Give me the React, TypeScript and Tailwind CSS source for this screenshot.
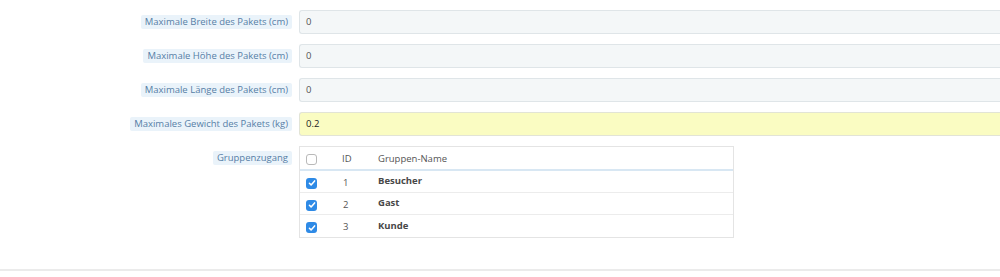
const fields = [
  { label: 'Maximale Breite des Pakets (cm)', value: '0' },
  { label: 'Maximale Höhe des Pakets (cm)', value: '0' },
  { label: 'Maximale Länge des Pakets (cm)', value: '0' },
  { label: 'Maximales Gewicht des Pakets (kg)', value: '0.2', highlight: true },
]

const groups = [
  { id: 1, name: 'Besucher' },
  { id: 2, name: 'Gast' },
  { id: 3, name: 'Kunde' },
]

function Check({ checked }: { checked?: boolean }) {
  if (!checked) {
    return <span className="block h-[11px] w-[11px] rounded-[3px] border border-[#b9b9b9] bg-white" />
  }
  return (
    <span className="flex h-[11px] w-[11px] items-center justify-center rounded-[3px] bg-[#2e8ae6]">
      <svg width="8" height="8" viewBox="0 0 8 8" fill="none">
        <path d="M1.4 4.2 3.1 5.9 6.6 1.9" stroke="white" strokeWidth="1.5" strokeLinecap="round" strokeLinejoin="round" />
      </svg>
    </span>
  )
}

function Label({ text }: { text: string }) {
  return (
    <div className="flex w-[292px] shrink-0 justify-end">
      <span className="rounded-[2px] bg-[#eaf3fa] px-[4px] text-[9.5px] leading-[14px] text-[#567ea6]">{text}</span>
    </div>
  )
}

export default function App() {
  return (
    <div className="h-[277px] w-[1000px] overflow-hidden bg-white font-['Open_Sans',sans-serif]">
      <div className="pt-[10px]">
        {fields.map((f) => (
          <div key={f.label} className="mb-[10px] flex items-center gap-[7px]">
            <Label text={f.label} />
            <div
              className={`flex h-[24px] flex-1 items-center rounded-l-[3px] border border-r-0 pl-[6px] text-[9.5px] ${
                f.highlight
                  ? 'border-[#e2e4d6] bg-[#fafcc2] text-[#222]'
                  : 'border-[#dfe5e8] bg-[#f4f7f8] text-[#555]'
              }`}
            >
              {f.value}
            </div>
          </div>
        ))}

        <div className="mt-[1px] flex items-start gap-[7px]">
          <div className="pt-[5px]">
            <Label text="Gruppenzugang" />
          </div>
          <div className="w-[435px] border border-[#e4e4e4] text-[9.5px] text-[#555]">
            <div className="flex h-[24px] items-center border-b-2 border-[#d8e7f3] pt-[3px]">
              <div className="w-[42px] pl-[6px]">
                <Check />
              </div>
              <div className="w-[36px]">ID</div>
              <div>Gruppen-Name</div>
            </div>
            {groups.map((g, i) => (
              <div
                key={g.id}
                className={`flex h-[22px] items-center ${i < groups.length - 1 ? 'border-b border-[#ececec]' : ''}`}
              >
                <div className="w-[42px] pl-[6px] pt-[3px]">
                  <Check checked />
                </div>
                <div className="w-[36px] pl-[1px] pt-[3px]">{g.id}</div>
                <div className="font-bold text-[#484848]">{g.name}</div>
              </div>
            ))}
          </div>
        </div>
      </div>
      <div className="mt-[31px] h-[2px] w-full bg-[#ebebeb]" />
    </div>
  )
}
